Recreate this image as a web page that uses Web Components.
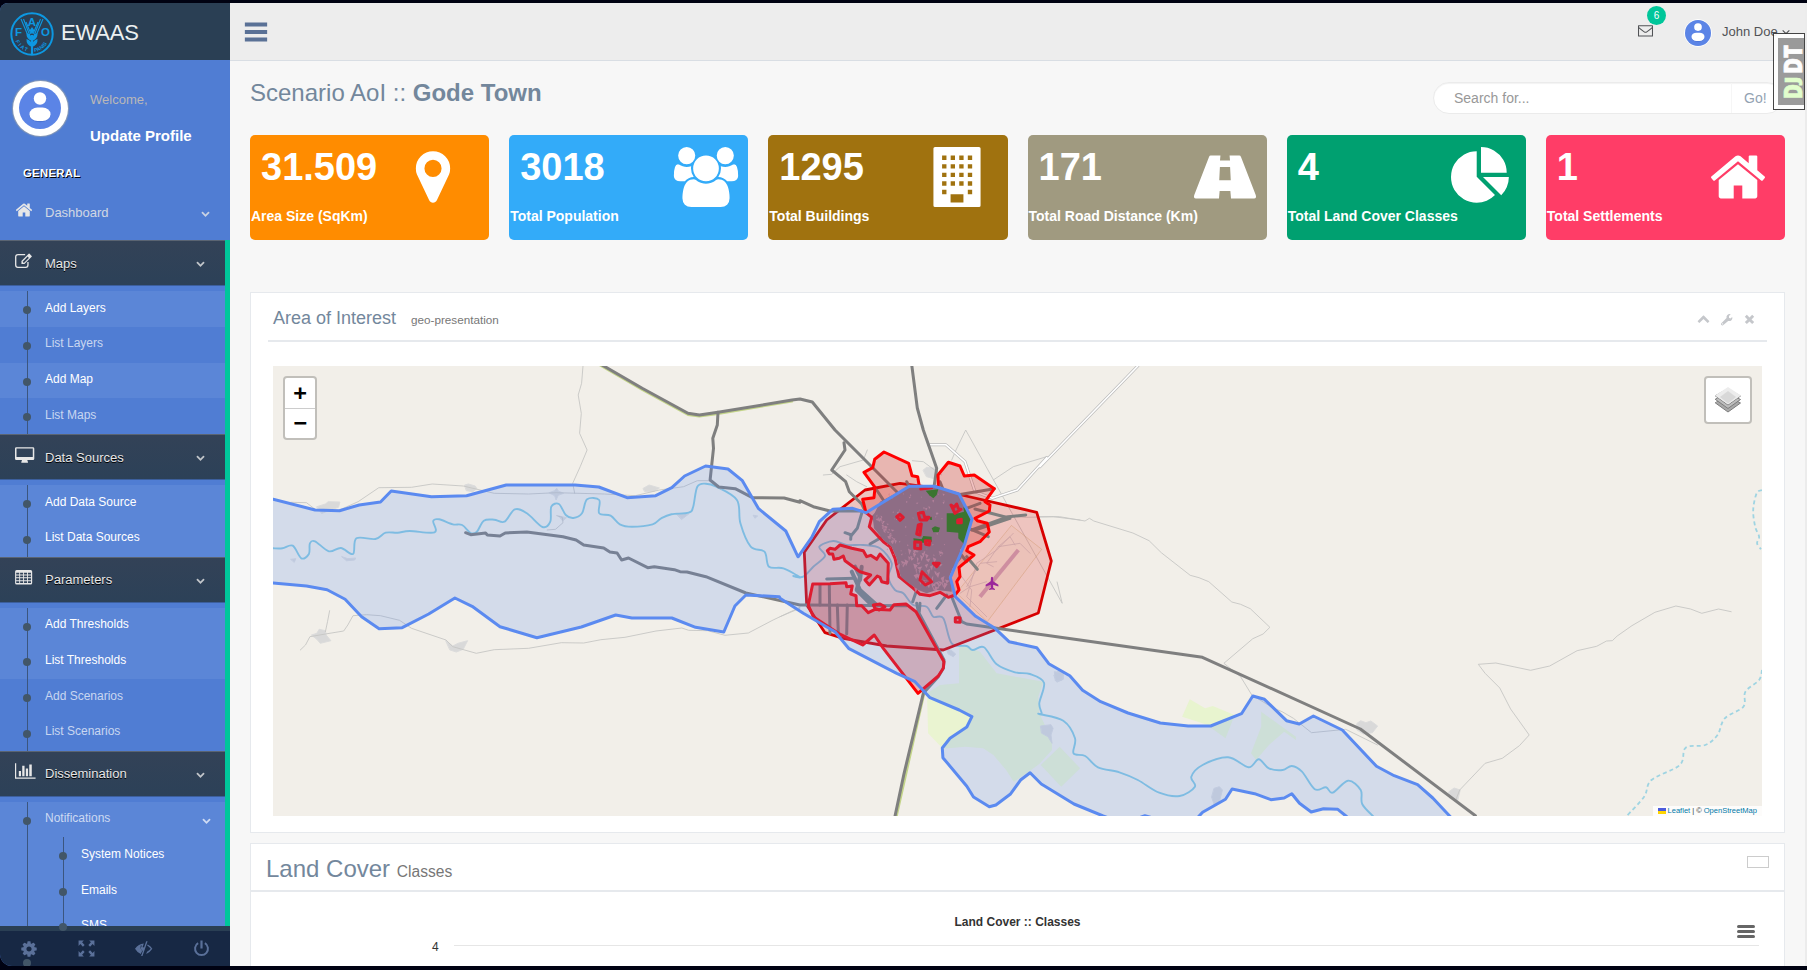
<!DOCTYPE html>
<html lang="en">
<head>
<meta charset="utf-8">
<title>EWAAS</title>
<style>
html,body{margin:0;height:100%;overflow:hidden;background:#000212}
body{font-family:"Liberation Sans",Arial,sans-serif;font-size:13px;line-height:18px;color:#73879c}
</style>
</head>
<body>
<app-shell></app-shell>
<script>
const ICONS = {
home:'<path d="M1472 992v480q0 26-19 45t-45 19h-384v-384h-256v384h-384q-26 0-45-19t-19-45v-480q0-1 .5-3t.5-3l575-474 575 474q1 2 1 6zm223-69l-62 74q-8 9-21 11h-3q-13 0-21-7l-692-577-692 577q-12 8-24 7-13-2-21-11l-62-74q-8-10-7-23.5t11-21.5l719-599q32-26 76-26t76 26l244 204v-195q0-14 9-23t23-9h192q14 0 23 9t9 23v408l219 182q10 8 11 21.5t-7 23.5z"/>',
marker:'<path d="M1152 640q0-106-75-181t-181-75-181 75-75 181 75 181 181 75 181-75 75-181zm256 0q0 109-33 179l-364 774q-16 33-47.5 52t-67.5 19-67.5-19-46.5-52l-365-774q-33-70-33-179 0-212 150-362t362-150 362 150 150 362z"/>',
pie:'<path d="M768 890l546 546q-106 108-247.5 168t-298.5 60q-209 0-385.5-103t-279.5-279.5-103-385.5 103-385.5 279.5-279.5 385.5-103v762zm187 6h773q0 157-60 298.5t-168 247.5zm709-128h-768v-768q209 0 385.5 103t279.5 279.5 103 385.5z"/>',
users:'<g transform="translate(-64 0)"><path d="M593 896q-162 5-265 128H194q-82 0-138-40.500T0 865q0-353 124-353 6 0 43.500 21t97.500 42.500T384 597q67 0 133-23-5 37-5 66 0 139 81 256zM1664 1533q0 120-73 189.500t-194 69.500H523q-121 0-194-69.500T256 1533q0-53 3.500-103.500t14-109T300 1212t43-97.500 62-81 85.500-53.500T602 960q10 0 43 21.500t73 48 107 48 135 21.500 135-21.500 107-48 73-48 43-21.500q61 0 111.500 20t85.500 53.500 62 81 43 97.500 26.500 108.500 14 109 3.500 103.500zM640 256q0 106-75 181t-181 75-181-75-75-181 75-181T384 0t181 75 75 181zM1344 640q0 159-112.500 271.500T960 1024 688.500 911.500 576 640t112.500-271.500T960 256t271.500 112.500T1344 640zM1920 865q0 78-56 118.500t-138 40.500h-134q-103-123-265-128 81-117 81-256 0-29-5-66 66 23 133 23 59 0 119-21.500t97.500-42.500 43.500-21q124 0 124 353zM1792 256q0 106-75 181t-181 75-181-75-75-181 75-181 181-75 181 75 75 181z"/></g>',
building:'<path fill-rule="evenodd" d="M240 0h1312q48 0 48 48v1696q0 48-48 48H240q-48 0-48-48V48q0-48 48-48z'+[256,512,768,1024,1280].map(y=>[416,672,928,1184].map((x,i)=>(y==1280&&i>0&&i<3)?'':`M${x+35} ${y}h130v130h-130z`).join('')).join('')+'M704 1410h384v250H704z"/>',
road:'<path fill-rule="evenodd" d="M470 256H760l-14 150h300l-14-150h290q36 0 52 40l440 1140q34 100-48 100h-690l-20-220H736l-20 220H26q-82 0-48-100L418 296q16-40 52-40zM744 600l-20 390h344l-20-390z"/>',
bars:'<path d="M128 240h1536v280H128zM128 756h1536v280H128zM128 1272h1536v280H128z"/>',
edit:'<path fill="none" stroke="currentColor" stroke-width="130" d="M1290 1000v300q0 230-220 230H290q-220 0-220-230V480q0-220 220-220h720"/><path d="M640 1200V900l720-720q40-40 90 0l210 210q40 40 0 90L940 1200zM760 960l120 130 500-500-120-130z" fill-rule="evenodd"/>',
desktop:'<path fill-rule="evenodd" d="M130 128h1660q130 0 130 130v1000q0 130-130 130h-560q0 90 60 190v86H630v-86q60-100 60-190H130q-130 0-130-130V258q0-130 130-130zm20 130v830h1620V258z"/>',
table:'<path fill-rule="evenodd" d="M160 200h1400q150 0 150 150v1150q0 150-150 150H160Q10 1650 10 1500V350q0-150 150-150z'+[540,820,1100,1380].map(y=>[120,510,900,1290].map(x=>`M${x} ${y-70}h300v180H${x}z`).join('')).join('')+'"/>',
chart:'<path d="M0 128h120v1410h1930v126H0zM380 896h220v512H380zM720 384h230v1024H720zM1080 640h220v768h-220zM1420 256h250v1152h-250z"/>',
cog:'<path d="M1152 896q0-106-75-181t-181-75-181 75-75 181 75 181 181 75 181-75 75-181zm512-109v222q0 12-8 23t-20 13l-185 28q-19 54-39 91 35 50 107 138 10 12 10 25t-9 23q-27 37-99 108t-94 71q-12 0-26-9l-138-108q-44 23-91 38-16 136-29 186-7 28-36 28h-222q-14 0-24.500-8.500t-11.500-21.500l-28-184q-49-16-90-37l-141 107q-10 9-25 9-14 0-25-11-126-114-165-168-7-10-7-23 0-12 8-23 15-21 51-66.500t54-70.500q-27-50-41-99l-183-27q-13-2-21-12.500t-8-23.500v-222q0-12 8-23t19-13l186-28q14-46 39-92-40-57-107-138-10-12-10-24 0-10 9-23 26-36 98.500-107.500t94.500-71.500q13 0 26 10l138 107q44-23 91-38 16-136 29-186 7-28 36-28h222q14 0 24.500 8.500t11.500 21.500l28 184q49 16 90 37l142-107q9-9 24-9 13 0 25 10 129 119 165 170 7 8 7 22 0 12-8 23-15 21-51 66.500t-54 70.500q26 50 41 98l183 28q13 2 21 12.500t8 23.500z"/>',
expand:'<path d="M60 60h560l-190 190 270 270-180 180-270-270-190 190zM1732 60h-560l190 190-270 270 180 180 270-270 190 190zM60 1732h560l-190-190 270-270-180-180-270 270-190-190zM1732 1732h-560l190-190-270-270 180-180 270 270 190-190z"/>',
eye:'<path d="M0 920Q380 380 930 360L800 760Q690 620 640 500 560 700 590 880 630 1060 760 1130L610 1480Q230 1310 0 920z"/><path d="M1180 130h150L790 1680H640zM560 720q60-130 180-180M1340 470q300 170 490 450-250 380-650 560l90-240q250-140 390-320-160-200-380-330z"/><path d="M700 620q120 210 330 180L900 1180q-280-30-290-300z"/>',
power:'<path fill="none" stroke="currentColor" stroke-width="210" d="M540 330a680 680 0 1 0 712 0"/><path d="M780 40h232v860H780z"/>',
mail:'<path fill="none" stroke="currentColor" stroke-width="125" stroke-linejoin="round" d="M62 320h1668v1240H62z"/><path fill="none" stroke="currentColor" stroke-width="125" d="M90 560q300 260 650 500 156 110 312 0 350-240 650-500"/>',
down:'<path d="M1683 808l-742 741q-19 19-45 19t-45-19l-742-741q-19-19-19-45.500t19-45.500l166-165q19-19 45-19t45 19l531 531 531-531q19-19 45-19t45 19l166 165q19 19 19 45.500t-19 45.500z"/>',
up:'<path transform="matrix(1 0 0 -1 0 1900)" d="M1683 808l-742 741q-19 19-45 19t-45-19l-742-741q-19-19-19-45.500t19-45.500l166-165q19-19 45-19t45 19l531 531 531-531q19-19 45-19t45 19l166 165q19 19 19 45.500t-19 45.500z"/>',
angle:'<path fill="none" stroke="currentColor" stroke-width="200" d="M300 600l596 596 596-596"/>',
wrench:'<path fill-rule="evenodd" d="M180 1400l720-710Q850 420 1020 270q190-170 460-90l-240 240v240l190 110 260-220q70 250-110 440-180 170-450 110L420 1680q-110 90-230-20-110-120-10-260zm120 40q-60 60 0 120 60 50 120 0 50-60 0-120-60-50-120 0z"/>',
close:'<path d="M250 520l280-280 366 366 366-366 280 280-366 366 366 366-280 280-366-366-366 366-280-280 366-366z"/>'
};
const el=(name,html)=>customElements.define(name,class extends HTMLElement{
  constructor(){super();this.attachShadow({mode:'open'})}
  connectedCallback(){const t=document.createElement('template');t.innerHTML=typeof html==='function'?html(this):html;this.shadowRoot.replaceChildren(t.content.cloneNode(true))}
});

el('app-icon',h=>`<style>:host{display:block;width:var(--s,14px);height:var(--s,14px);flex:none}svg{display:block;width:100%;height:100%;overflow:visible;fill:currentColor}</style>
<svg viewBox="0 0 1792 1792">${ICONS[h.getAttribute('name')]}</svg>`);

el('user-avatar',`<style>:host{display:block;flex:none}svg{display:block;width:100%;height:100%}</style>
<svg viewBox="0 0 42 42"><circle cx="21" cy="21" r="21" fill="#5b84e6"/><ellipse cx="21" cy="28.500" rx="10.500" ry="6.800" fill="#3f68c8" opacity=".6"/><circle cx="21" cy="11.500" r="6.200" fill="#fff"/><rect x="10.500" y="20.500" width="21" height="13.500" rx="8" ry="6.500" fill="#fff"/></svg>`);

el('fao-logo',`<style>:host{display:block;width:44px;height:44px;flex:none}svg{display:block}text{font-family:"Liberation Sans",sans-serif;font-weight:bold;fill:#0d98e2}</style>
<svg width="44" height="44" viewBox="0 0 44 44"><circle cx="22" cy="22" r="20.700" fill="none" stroke="#0d98e2" stroke-width="2"/>
<text x="5" y="24" font-size="11.500">F</text><text x="17.800" y="14" font-size="11.500">A</text><text x="31" y="24" font-size="11.500">O</text>
<g fill="none" stroke="#0d98e2" stroke-width="1.100"><path d="M11 7l8 19M13.500 7l6.500 17M16 10l5 12M33 7l-8 19M30.500 7l-6.500 17M28 10l-5 12"/><path stroke-width="2.200" d="M22 23v20"/></g>
<g fill="#0d98e2"><path d="M22 15l2.500 3.500L22 22l-2.500-3.500zM22 29q-6-2-5.500-8 5 1.500 5.500 6 .5-4.500 5.500-6 .5 6-5.500 8zM22 35q-6-2-5.500-8 5 1.500 5.500 6 .5-4.500 5.500-6 .5 6-5.500 8z"/></g>
<path id="a" d="M5.500 29A18 18 0 0 0 20 40" fill="none"/><path id="b" d="M24.500 40A18 18 0 0 0 39 28" fill="none"/>
<text font-size="5.200"><textPath href="#a" textLength="16">FIAT</textPath></text><text font-size="5.200"><textPath href="#b">PANIS</textPath></text></svg>`);

el('nav-head',h=>`<style>
:host{display:flex;box-sizing:border-box;height:45px;width:230px;align-items:center;padding:0 20px 0 15px;color:#e7e7e7;font-size:13px}
:host([active]){height:46px;width:225px;margin-bottom:5px;padding-top:1.400px;border-top:1px solid #5a6472;border-bottom:1px solid #3c5f9d;background:linear-gradient(#334257,#2c4158);text-shadow:0 1px 0 #000}
.i{width:30px;--s:18px;margin-top:-6px}.t{flex:1}.c{--s:9px;opacity:.8}:host(:not([active])) .t{opacity:.85}
</style><div class="i"><app-icon name="${h.getAttribute('icon')}"></app-icon></div><div class="t"><slot></slot></div><app-icon class="c" name="down"></app-icon>`);

el('nav-link',h=>`<style>
:host{display:block;position:relative;box-sizing:border-box;height:35.75px;padding:7.500px 14px 0 45px;font-size:12px;color:rgba(255,255,255,.7)}
:host([lit]){background:#5b86d7;color:#fff}
:host([soft]){background:#5b86d7}
:host([deep]){padding-left:81px}
i{position:absolute;width:8px;height:8px;border-radius:50%;background:#425668;left:23px;top:15px}
b{position:absolute;left:27px;top:0;bottom:0;width:1px;background:#3b567f}
:host([deep]) i.d{left:59px}:host([deep]) b.d{left:63px}
:host(:not([deep])) .d{display:none}:host([deep]) i.m{display:none}
.r{display:flex;justify-content:space-between;align-items:center}app-icon{--s:9px;margin-top:5px}
</style><b class="m"></b><b class="d"></b><i class="m"></i><i class="d"></i><div class="r"><slot></slot>${h.hasAttribute('more')?'<app-icon name="down"></app-icon>':''}</div>`);

el('side-bar',`<style>
:host{display:flex;flex-direction:column;width:230px;height:963px;background:#507dd3;border-radius:8px 0 0 12px;overflow:hidden;position:relative;flex:none}
.brand{height:57px;background:#2a3f54;display:flex;align-items:center;color:#ecf0f1;font-size:22px;padding:0 10px;box-sizing:border-box;gap:7px;flex:none}
.brand fao-logo{margin-top:5px}.brand span{margin-top:2px;letter-spacing:-.2px}
.prof{display:flex;height:93px;flex:none}
.pic{width:42px;height:42px;padding:6.500px;border-radius:50%;background:#fff;margin:20.500px 0 0 12.500px;box-shadow:0 0 1px 1px #8a9bb4}
.pic user-avatar{width:42px;height:42px}
.w{margin:31px 0 0 22.500px;color:#bab8b8}.w strong{display:block;color:#fff;font-size:15px;margin-top:18px}
h3{margin:11px 0 0 23px;font-size:11.300px;letter-spacing:.3px;color:#fff;text-shadow:1px 1px #000;height:27px;line-height:18px;flex:none}
.menu{height:735px;flex:none;overflow:hidden}
.on{border-right:5px solid #00c69a;width:225px}
.strip{height:5px;background:#2a3f54;position:absolute;left:0;right:0;top:923px}
.foot{height:35px;background:#172844;position:absolute;left:0;right:0;top:928px;display:grid;grid-template-columns:repeat(4,1fr);place-items:center;color:#5a7099;--s:17px}
.foot app-icon:first-child{--s:18px}
.dot{position:absolute;width:8px;height:8px;border-radius:50%;background:#425668}
</style>
<div class="brand"><fao-logo></fao-logo><span>EWAAS</span></div>
<div class="prof"><div class="pic"><user-avatar></user-avatar></div><div class="w">Welcome,<strong>Update Profile</strong></div></div>
<h3>GENERAL</h3>
<div class="menu"><nav-head icon="home" style="height:49px;padding-bottom:5px;box-sizing:border-box">Dashboard</nav-head>
<div class="on">
<nav-head active icon="edit">Maps</nav-head><nav-link lit>Add Layers</nav-link><nav-link>List Layers</nav-link><nav-link lit>Add Map</nav-link><nav-link>List Maps</nav-link>
<nav-head active icon="desktop">Data Sources</nav-head><nav-link lit>Add Data Source</nav-link><nav-link lit>List Data Sources</nav-link>
<nav-head active icon="table">Parameters</nav-head><nav-link lit>Add Thresholds</nav-link><nav-link lit>List Thresholds</nav-link><nav-link>Add Scenarios</nav-link><nav-link>List Scenarios</nav-link>
<nav-head active icon="chart">Dissemination</nav-head><nav-link soft more>Notifications</nav-link><nav-link lit deep>System Notices</nav-link><nav-link lit deep>Emails</nav-link><nav-link lit deep>SMS</nav-link>
</div></div>
<div class="strip"></div><div class="foot"><app-icon name="cog"></app-icon><app-icon name="expand"></app-icon><app-icon name="eye"></app-icon><app-icon name="power"></app-icon></div>
<div class="dot" style="left:59px;top:920px"></div><div class="dot" style="left:23px;top:956px"></div>`);

el('top-bar',`<style>
:host{display:flex;height:57px;background:#ededed;border-bottom:1px solid #d9dee4;align-items:center;color:#515356;position:relative}
.menu{--s:26px;color:#5a7196;margin-left:13px;flex:1}
.mail{position:relative;--s:15px;margin-right:31px;color:#515356;margin-top:-2px}
.badge{position:absolute;left:9px;top:-17px;width:19px;height:19px;border-radius:50%;background:#00c69a;color:#fff;font-size:10px;line-height:19px;text-align:center}
user-avatar{width:26px;height:26px;border:1.500px solid #fff;border-radius:50%;margin:2px 10px 0 0}
.u{width:69px;font-size:13px;display:flex;align-items:center;gap:3px;white-space:nowrap;margin-right:14px}.u app-icon{--s:10px}
</style><div class="menu"><app-icon name="bars"></app-icon></div><div class="mail"><app-icon name="mail"></app-icon><span class="badge">6</span></div><user-avatar></user-avatar><div class="u">John Doe <app-icon name="angle"></app-icon></div>`);

el('stat-tile',h=>`<style>
:host{display:block;position:relative;height:105px;border-radius:5px;background:${h.getAttribute('bg')};color:#fff;font-weight:bold;overflow:hidden}
.n{font-size:38px;line-height:42px;padding:11px 0 0 11px}.l{font-size:14px;line-height:20px;margin:18px 0 0 1px;white-space:nowrap}
app-icon{--s:60px;position:absolute;top:12px;left:${h.getAttribute('at')}px}
</style><div class="n">${h.getAttribute('value')}</div><div class="l"><slot></slot></div><app-icon name="${h.getAttribute('icon')}"></app-icon>`);

el('search-box',`<style>:host{display:flex;width:350px;height:32px;box-sizing:border-box;border-radius:25px;background:#fff;border:1px solid #ebebeb;box-shadow:inset 0 1px 1px rgba(0,0,0,.05);font-size:14px;line-height:30px;color:#989898}
.f{flex:1;padding-left:20px}.g{color:#93a2b2;border-left:1px solid #f6f6f6;padding:0 17px 0 12px;width:21px}</style><div class="f">Search for...</div><div class="g">Go!</div>`);

el('debug-handle',`<style>:host{position:absolute;left:1773px;top:33px;width:30px;height:75px;border:1px solid #333;background:#fff;opacity:.9;display:block}
svg{display:block;overflow:visible}text{font-family:"Open Sans","DejaVu Sans",sans-serif;font-weight:800;stroke-width:.7px}</style>
<svg width="30" height="75"><rect x="4" y="4" width="26" height="67" fill="#929292"/>
<g transform="translate(28 65) rotate(-90)"><text x="0" y="0" font-size="25" fill="#dfffc8" stroke="#dfffc8" textLength="15" lengthAdjust="spacingAndGlyphs">D</text><text x="15.500" y="-4" font-size="17" fill="#dfffc8" stroke="#dfffc8" textLength="7" lengthAdjust="spacingAndGlyphs">J</text><text x="25" y="0" font-size="25" fill="#fff" stroke="#fff" textLength="29" lengthAdjust="spacingAndGlyphs">DT</text></g></svg>`);

/* Map drawing: every trace is a list of points; a leading letter picks the survey sheet
   whose offset and scale the following points use. */
const SHEET={W:[1/2.904,-13,-16],C:[1/3,507,64],E:[1/2.0443,767,-16],S:[1/1.96,427,324]};
function pts(s){let k=SHEET.C;const o=[];for(const t of s.trim().split(/\s+/)){if(SHEET[t]){k=SHEET[t];continue}const[a,b]=t.split(',').map(Number);o.push([+(a*k[0]+k[1]).toFixed(1),+(b/3+k[2]).toFixed(1)])}return o}
const line=s=>'M'+pts(s).map(p=>p.join(' ')).join('L');
const area=s=>line(s)+'Z';
function curve(s){const p=pts(s);let d='M'+p[0];for(let i=0;i<p.length-1;i++){const a=p[i-1]||p[i],b=p[i],c=p[i+1],e=p[i+2]||c;d+=`C${b[0]+(c[0]-a[0])/6} ${b[1]+(c[1]-a[1])/6} ${c[0]-(e[0]-b[0])/6} ${c[1]-(e[1]-b[1])/6} ${c[0]} ${c[1]}`}return d}
const P=(d,c)=>`<path class="${c}" d="${d}"/>`;
const lines=(c,...a)=>a.map(s=>P(line(s),c)).join('');
const town='C 258,248 248,208 282,203 285,172 252,127 278,113 284,88 312,66 386,100 396,137 413,140 419,177 475,170 474,135 505,97 540,108 553,138 583,135 643,176 615,215 630,225 628,243 585,265 592,272 622,280 628,306 600,335 565,350 560,362 582,375 537,412 540,440 530,455 537,480 525,495 505,502 480,487 450,497 420,493 400,475 357,440 345,385 330,350 310,335 268,290 275,262';
function flecks(){let o='',r=7;const n=()=>(r=(r*16807)%2147483647)/2147483647;
 const f=(x,y,a,b)=>{const s=n()<.5?-1:1;o+=`M${x.toFixed(1)} ${y.toFixed(1)}l${(a*s).toFixed(1)} ${(b*.4).toFixed(1)}l${(-a*s*.6).toFixed(1)} ${b.toFixed(1)}z`};
 for(let i=0;i<34;i++){const t=n();f(603+t*16+n()*5,148+t*24+n()*5,1+n()*3,1+n()*2.5)}
 for(let i=0;i<22;i++)f(612+n()*60,127+n()*20,.8+n()*2,.8+n()*1.500);
 for(let i=0;i<30;i++)f(614+n()*60,150+n()*40,.6+n()*1.300,.6+n());
 for(let i=0;i<26;i++)f(626+n()*46,182+n()*18,1+n()*4,1.500+n()*4);
 for(let i=0;i<26;i++)f(640+n()*32,200+n()*22,1+n()*5,2+n()*5);
 return o}
const river='W 38,595 65,595 95,587 120,625 142,612 145,580 160,574 200,604 235,594 270,612 280,565 335,567 365,548 400,548 435,543 507,547 503,513 520,508 560,523 587,525 612,549 630,545 650,512 680,509 710,515 740,478 775,490 820,531 843,515 846,470 868,462 888,495 910,504 935,490 950,448 985,450 985,490 1018,497 1045,523 1080,530 1140,523 1165,505 1195,493 1245,488 1258,470 1270,410 1295,401 1325,410 1385,450 1395,520 1425,590 1465,605 1478,650 1520,655 1568,682 C 40,438 70,440 100,410 135,378 118,350 160,333 200,345 250,345 300,355 335,400 325,440 345,480 370,490 400,525 440,530 460,560 490,565 515,640 560,648 578,660 612,652 650,703 705,727 750,732 792,758 778,820 785,850 S 665,72 712,92 735,145 732,190 755,198 780,232 822,247 858,270 900,308 940,318 970,290 963,260 985,225 1035,202 1075,232 1095,208 1115,235 1142,240 1160,228 1180,245 1205,298 1227,292 1240,308 1270,272 1295,300 1298,342 1320,380';
const lake='W -30,440 38,448 160,480 231,482 288,465 350,456 381,423 498,440 600,437 715,405 915,405 984,411 1066,443 1149,437 1196,413 1233,378 1294,348 1359,357 1401,392 1448,476 1527,543 1562,620 C 55,380 95,322 118,275 158,238 218,235 258,248 388,169 463,169 537,192 576,268 554,342 511,443 526,500 587,559 645,595 687,635 770,653 E 18,941 61,977 87,1021 124,1055 180,1089 246,1119 303,1128 349,1128 412,1091 435,1038 459,1048 504,1112 530,1122 559,1098 618,1140 688,1249 724,1277 772,1304 803,1344 837,1397 870,1450 S 1290,410 1266,378 1250,358 1222,356 1198,366 1175,340 1160,311 1145,324 1119,329 1087,311 1043,297 1030,328 985,367 965,400 890,385 872,377 830,400 790,378 733,342 669,282 647,248 629,269 608,313 580,345 567,350 536,321 523,289 476,203 475,174 490,145 523,111 533,80 508,60 C 450,803 405,755 350,730 207,656 165,605 70,550 0,505 W 1508,740 1411,735 1379,768 1347,846 1265,832 1196,804 1080,804 1033,795 933,831 804,863 697,830 616,769 566,744 490,792 413,833 346,836 295,800 247,748 195,719 135,708 38,699 -30,696';
function mapArt(){return `
${P(area('C 537,642 600,665 650,730 790,755 775,800 778,850 S 665,70 690,150 690,180 665,222 640,250 615,275 600,240 575,195 555,175 520,170 476,176 447,130 445,10 C 480,765 537,760'),'pk')}
${P(area('S 705,170 745,235 708,290 668,225'),'pk')}${P(area('S 1100,65 1168,140 1168,150 1145,125 1115,165 1090,210 1080,190 1100,110'),'pk')}
${P(area('S 960,28 990,55 1005,48 1048,75 1000,107 945,80'),'pl')}${P(area('S 1048,75 1030,145 1000,112'),'pk')}
${['W 595,405 605,402 625,408 630,416 618,425 600,422','W 165,470 190,462 198,455 232,456 228,472 205,480 180,490','W 840,428 855,422 862,415 866,423 882,430 866,436 860,450 856,438','W 1113,415 1130,405 1160,414 1145,424 1118,425','W 1208,490 1245,492 1225,508','W 150,855 165,850 172,838 190,842 192,855 206,872 175,880 165,868','W 540,873 560,888 575,880 603,872 590,898 570,906 552,900','W 868,498 890,503 880,512','W 238,620 255,626 278,624 275,630 252,632','W 90,628 104,626 100,636','W 1433,496 1445,498 1438,504','C 430,120 440,112 470,115 475,135 465,147 440,140','C 822,735 835,722 850,730 850,748 832,756','S 1288,100 1295,92 1305,98 1315,93 1328,108 1318,128 1300,132 1288,120','S 1468,305 1478,294 1490,300 1485,332 1470,325','S 1008,295 1018,290 1024,300 1018,335 1008,345 1003,322','S 668,108 688,104 692,115 688,135 690,160 682,140 670,130','E 30,965 48,970 45,990 32,992','C 500,655 515,662 527,672 520,680 505,672'].map(s=>P(area(s),'vl')).join('')}
${P(curve(river),'rv')}
${P(curve('E 1476,420 1465,430 1458,480 1462,530 1470,560 1466,580 1474,598'),'ds')}${P(curve('E 1476,960 1470,990 1442,1025 1438,1070 1400,1105 1385,1155 1360,1185 1320,1193 1308,1245 1250,1290 1235,1340 1200,1397'),'ds')}
${lines('tr','W 938,48 934,100 924,135 933,190 928,250 950,300 930,350 908,400 914,430','W 90,457 135,458 160,478','W 231,480 285,455 345,413 440,412 500,402 590,408 680,430 780,432 860,428 1000,432 1090,437 1160,420 1230,410 1270,392 1310,392 1340,418','W 117,900 132,885 145,860 190,852 243,843 255,825 270,797 310,794 350,797 405,811 440,835 540,870 560,890 628,910 680,899 780,895 875,878 940,879 990,869 1060,862 1150,843 1225,834 1245,841 1300,842 1350,856 1418,849 1490,810 1568,772','W 202,782 196,815 190,845','W 862,497 878,502 880,518 858,538 834,540',
'E 0,500 40,500 92,513 101,505 110,513 190,549 223,572 248,608 307,676 325,683 345,695 392,756 410,763 430,776 470,832 456,852 435,866 376,940 410,980 433,1035 478,1075 495,1085 518,1105 555,1148 625,1138 690,1185','E 850,1350 858,1320 910,1240 945,1225 980,1187 1000,1155 962,1077 940,1014 910,970 896,943 932,939 1003,961 1042,948 1098,902 1138,889 1158,873 1170,872 1180,858 1210,827 1257,787 1300,768 1330,777 1353,790 1387,777 1413,785','S 700,-324 710,-260 C 557,0 528,60 515,90','C 800,80 700,110 640,150','C 130,135 155,133 180,110 250,90 262,60','C 200,135 230,155 260,170','C 670,258 740,262 820,260 900,270','C 397,92 430,95 450,110 485,135','C 0,560 60,535')}
${P(line('C 450,44 497,44 555,95 585,185 637,205 712,180 800,83 E 0,350 200,48'),'hc')}${P(line('C 450,44 497,44 555,95 585,185 637,205 712,180 800,83 E 0,350 200,48'),'hw')}
${P(area('C 73,367 140,270 255,180 360,160 475,175 545,195 770,247 814,393 775,549 490,660 320,648 190,625 135,608 80,525'),'rd')}
${P(area('C 695,287 785,358 622,575 530,490'),'ap')}
${lines('st','C 620,560 560,500 590,400 650,360 700,310','C 640,410 620,400 655,350 720,340 750,370','C 540,490 570,470 620,455','C 545,440 575,480 570,530','C 655,350 690,320 705,345','C 560,470 600,400 650,395')}
${lines('mg','W 985,44 1110,119 1243,194 1276,199 1330,191 1545,154','S 440,5 385,380')}
${lines('mr','W 985,40 1110,115 1243,190 1276,195 1330,187 1545,150 C 60,-93 97,-84 165,0 350,185','W 1330,187 1328,225 1315,265 1317,295 1307,390 1332,411 1380,416 1430,443 1522,444 1568,457 C 60,212 100,230 150,243 245,243','W 597,548 612,554 655,549 660,555 697,558 712,549 775,546 880,560 918,570 940,585 998,594 1016,606 1037,609 1050,630 1070,624 1126,653 1145,650 1203,659 1220,665 1240,666 1295,680 1411,729 1568,765 C 80,525 380,527','C 395,-196 412,-66 430,0 470,115 463,165','C 192,38 195,60 155,120 197,155 208,185 245,222 258,248','C 515,500 545,575 560,582 900,630 E 332,922 655,1137 890,1397','C 410,520 415,545 492,690 490,715 475,740 430,790 S 400,250 382,380','C 245,250 232,295 215,315 195,308','C 213,315 212,328','C 140,447 225,445','C 575,300 685,260 737,255','C 585,237 690,265 585,300','C 560,380 592,418','C 500,495 470,535','C 410,480 398,515','C 420,520 418,545','C 270,342 305,322','C 480,155 492,185','C 520,250 600,220','C 500,200 643,176','C 530,280 625,320','C 540,370 560,395','C 290,180 330,240','C 275,265 300,240','C 120,465 120,525','C 148,465 150,610','C 172,525 175,610','C 202,525 200,612','C 380,155 400,195')}
${lines('mb','C 225,410 240,440 230,480 275,525','C 215,425 240,480 290,525','C 245,410 240,450')}
${P(area(town),'rf')}
${P(area('C 300,215 388,169 463,169 537,192 576,268 554,342 540,360 545,385 518,415 508,440 515,470 515,485 470,480 440,490 415,480 380,455 362,440 350,385 335,350 313,332 282,295 278,262'),'ms')}
<path class="fk" d="${flecks()}"/>
${lines('pr','C 600,500 715,360')}
${P(area('C 500,250 535,250 552,245 550,232 560,235 576,268 555,345 535,325 535,308 500,305'),'gr')}${P(area('C 437,182 475,178 470,195 460,205 448,196'),'gr')}${P(area('C 400,325 425,328 430,318 455,320 455,335 430,338 402,335'),'gr')}${P(area('C 455,295 465,289 480,293 476,306 460,307'),'gr')}${P(area('C 448,262 455,260 456,270 449,269'),'gr')}
${P(area('C 98,462 150,461 198,458 200,470 217,468 212,492 228,497 230,527 245,527 265,548 285,538 330,540 342,524 378,522 408,545 492,695 490,715 475,738 414,790 310,655 283,615 248,645 175,610 100,560 85,525'),'rf')}
${P(area('C 142,362 150,355 165,358 180,345 215,355 250,362 260,380 272,376 290,388 300,372 325,400 323,460 305,455 300,442 292,438 268,465 255,450 272,435 240,425 195,392 190,378 178,385 162,388 158,372 148,372'),'rf')}
${['C 350,260 360,253 370,262 360,271','C 415,250 430,247 434,262 447,262 440,270 420,270','C 415,285 424,282 420,315 410,312','C 404,335 422,337 422,356 404,355','C 436,332 450,333 448,345 437,343','C 513,225 522,232 530,222 535,235 543,238 525,250','C 533,270 544,268 544,278 533,278','C 426,425 455,455 436,465 420,450','C 460,400 478,400 470,410','C 526,563 540,563 540,577 526,576','C 280,525 300,522 315,530 298,540 285,535','C 422,177 455,173'].map(s=>P(area(s),'rf')).join('')}
${P(area(lake),'bl')}
<path class="pn" transform="translate(719 216.500) scale(.58)" d="M0-10q2 0 2 4v4l9 6v3l-9-3v5l3 2v2l-5-1-5 1v-2l3-2v-5l-9 3v-3l9-6v-4q0-4 2-4z"/>`}

el('geo-map',()=>`<style>
:host{display:block;position:relative;height:450px;background:#f2efe9;overflow:hidden}
svg.art{display:block;width:1489px;height:450px}
path{fill:none;stroke-linejoin:round;stroke-linecap:round}
.pk{fill:#eaf4d1}.pl{fill:#e8f4cf}.vl{fill:#d9d9d9;stroke:#dcdcdc}
.rv{stroke:#88c9df;stroke-width:1.900}.ds{stroke:#9fd4e2;stroke-width:1.800;stroke-dasharray:4 3;stroke-linecap:butt}
.tr{stroke:#c6c6c4;stroke-width:.9}.hc{stroke:#bbb;stroke-width:3}.hw{stroke:#fff;stroke-width:1.600}
.mg{stroke:#c3d488;stroke-width:2.400}.mr{stroke:#7f7f7f;stroke-width:3}.mb{stroke:#7f7f7f;stroke-width:4}
.rd{fill:rgba(224,0,0,.18);stroke:#d80000;stroke-width:2.800}.rf{fill:rgba(208,30,25,.27);stroke:#f00;stroke-width:3}
.ms{fill:#9b666b}.gr{fill:#327000}.pr{stroke:rgba(170,80,130,.45);stroke-width:4;stroke-linecap:butt}
.fk{fill:#d6848c;opacity:.8}.pn{fill:#9b259b}
.ap{fill:rgba(230,180,140,.1);stroke:rgba(200,140,90,.5);stroke-width:.7}.st{stroke:#cda3a6;stroke-width:.8}
.bl{fill:rgba(90,140,238,.2);stroke:#5b8af0;stroke-width:3}
.ctl{position:absolute;background:#fff;border:2px solid rgba(0,0,0,.2);background-clip:padding-box;border-radius:4px}
.z{left:10px;top:10px;width:30px;font:bold 22px/30px "DejaVu Sans Mono","Liberation Mono",monospace;color:#000;text-align:center}
.z div{height:30px}.z div+div{border-top:1px solid #ccc;height:29px;line-height:28px}
.l{right:10px;top:10px;width:44px;height:44px;display:grid;place-items:center}
.at{position:absolute;right:0;bottom:0;height:10px;padding:0 5px;background:rgba(255,255,255,.8);font-size:7.550px;line-height:10px;color:#333;display:flex;gap:2px;align-items:center;white-space:nowrap}
.at a{color:#0078a8}
</style><svg class="art" viewBox="0 0 1489 450">${mapArt()}</svg>
<div class="ctl z"><div>+</div><div>−</div></div>
<div class="ctl l"><svg width="26" height="26" viewBox="0 0 26 26"><path style="fill:#a9a9a9;stroke:#7c7c7c" d="M.5 16L13 25l12.500-9L13 9z"/><path style="fill:#bdbdbd;stroke:#7c7c7c" d="M.5 12.500L13 21.500l12.500-9L13 6z"/><path style="fill:#ddd;stroke:#7c7c7c" d="M.5 9L13 18l12.500-9L13 2z"/><path style="fill:#ececec" d="M0 8.500L13 0l13 8.500-13 9z"/><path style="fill:#d8d8d8" d="M5 10l8-6 8 6-8 6.500z"/></svg></div>
<div class="at"><svg width="8" height="6"><path style="fill:#4c5bdc" d="M0 0h8v3H0z"/><path style="fill:#ffd500" d="M0 3h8v3H0z"/></svg><a>Leaflet</a><span>|</span><span>©</span><a>OpenStreetMap</a></div>`);

el('map-panel',`<style>
:host{display:block;background:#fff;border:1px solid #e6e9ed;height:539px;box-sizing:content-box;padding:0 17px}
.h{display:flex;height:47px;align-items:center;border-bottom:2px solid #e6e9ed;padding:0 11px 0 5px;margin-bottom:24px}
h2{font-size:18px;font-weight:400;margin:2px 15px 0 0}small{flex:1;font-size:11.700px;color:#777;margin-top:6px}
.t{display:flex;gap:10px;color:#c5c7cb;--s:13px;margin-top:5px}geo-map{margin:0 5px}
</style><div class="h"><h2>Area of Interest</h2><small>geo-presentation</small><div class="t"><app-icon name="up"></app-icon><app-icon name="wrench"></app-icon><app-icon name="close"></app-icon></div></div><geo-map></geo-map>`);

el('chart-panel',`<style>
:host{display:block;background:#fff;border:1px solid #e6e9ed;height:160px}
.h{display:flex;height:46px;border-bottom:2px solid #e6e9ed;padding:0 15px;justify-content:space-between;align-items:center}
h2{font-size:24px;font-weight:400;margin:6px 0 0}small{font-size:15.600px;color:#777}
.box{width:20px;height:10px;border:1px solid #ccc;margin-top:-11px}
.c{display:grid;grid-template-columns:1fr auto 1fr;padding:22px 29px 0 29px;font-size:12px;color:#333;align-items:start}
.c b{grid-column:2;line-height:16px}.m{justify-self:end;width:18px;display:grid;gap:2px;margin-top:11px}.m i{height:3px;border-radius:2px;background:#666}
.ax{display:flex;padding:0 25px 0 181px;gap:15px;margin-top:2px;font-size:12px;line-height:14px;color:#333}.ax i{flex:1;height:1px;background:#e6e6e6;margin-top:5px}
</style><div class="h"><h2>Land Cover <small>Classes</small></h2><div class="box"></div></div><div class="c"><b>Land Cover :: Classes</b><div class="m"><i></i><i></i><i></i></div></div><div class="ax"><span>4</span><i></i></div>`);

el('app-shell',`<style>
:host{display:flex;box-sizing:border-box;height:966px;padding-top:3px;position:relative;overflow:hidden}
main{flex:1;min-width:0;background:#f7f7f7;height:963px;overflow:hidden;border-right:2px solid #ececec;box-sizing:border-box}
.title{display:flex;justify-content:space-between;padding:21px 20px 0 20px;height:53px}
h1{font-size:24px;font-weight:400;margin:0;line-height:22px}search-box{margin-right:2px}
.tiles{display:grid;grid-template-columns:repeat(6,1fr);gap:20px;padding:0 20px;margin-bottom:52px}
map-panel,chart-panel{margin:0 20px 10px}
</style><side-bar></side-bar><main><top-bar></top-bar><div class="title"><h1>Scenario AoI :: <b>Gode Town</b></h1><search-box></search-box></div>
<div class="tiles"><stat-tile bg="#ff8c00" value="31.509" icon="marker" at="152.500">Area Size (SqKm)</stat-tile><stat-tile bg="#33abf9" value="3018" icon="users" at="167">Total Population</stat-tile><stat-tile bg="#a0720f" value="1295" icon="building" at="159">Total Buildings</stat-tile><stat-tile bg="#a09a80" value="171" icon="road" at="167.500">Total Road Distance (Km)</stat-tile><stat-tile bg="#00a070" value="4" icon="pie" at="164.500">Total Land Cover Classes</stat-tile><stat-tile bg="#ff3d67" value="1" icon="home" at="162.500">Total Settlements</stat-tile></div>
<map-panel></map-panel><chart-panel></chart-panel></main><debug-handle></debug-handle>`);
</script>
</body>
</html>
